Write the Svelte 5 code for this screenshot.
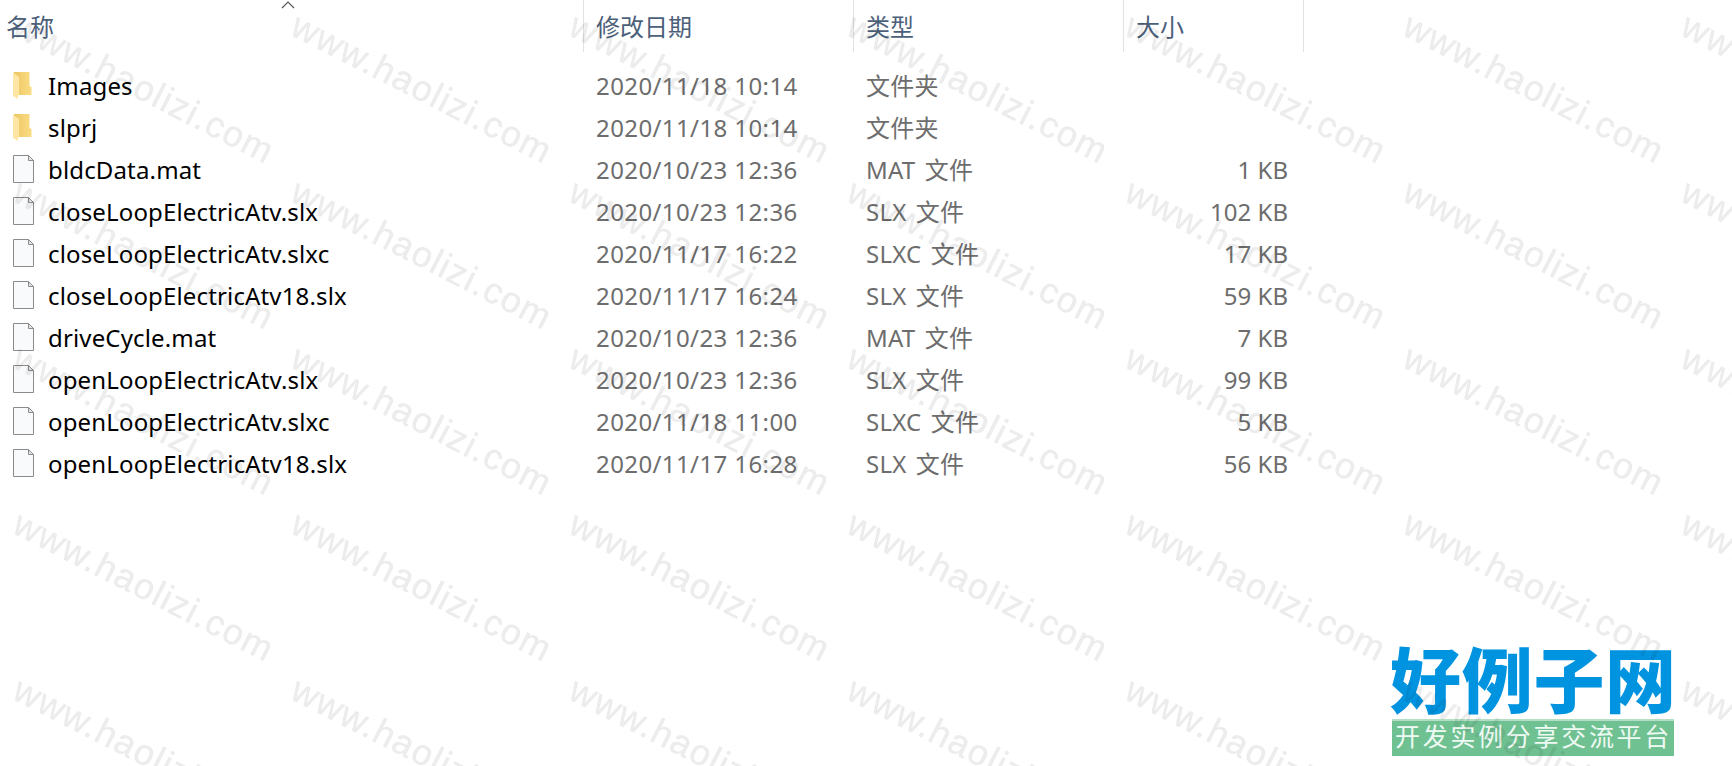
<script>
	let files = [
		{ name: 'Images', date: '2020/11/18 10:14', type: '文件夹', folder: true },
		{ name: 'slprj', date: '2020/11/18 10:14', type: '文件夹', folder: true },
		{ name: 'bldcData.mat', date: '2020/10/23 12:36', type: 'MAT 文件', size: '1 KB' },
		{ name: 'closeLoopElectricAtv.slx', date: '2020/10/23 12:36', type: 'SLX 文件', size: '102 KB' },
		{ name: 'closeLoopElectricAtv.slxc', date: '2020/11/17 16:22', type: 'SLXC 文件', size: '17 KB' },
		{ name: 'closeLoopElectricAtv18.slx', date: '2020/11/17 16:24', type: 'SLX 文件', size: '59 KB' },
		{ name: 'driveCycle.mat', date: '2020/10/23 12:36', type: 'MAT 文件', size: '7 KB' },
		{ name: 'openLoopElectricAtv.slx', date: '2020/10/23 12:36', type: 'SLX 文件', size: '99 KB' },
		{ name: 'openLoopElectricAtv.slxc', date: '2020/11/18 11:00', type: 'SLXC 文件', size: '5 KB' },
		{ name: 'openLoopElectricAtv18.slx', date: '2020/11/17 16:28', type: 'SLX 文件', size: '56 KB' }
	];
</script>

<main class="explorer">
	<div class="header">
		<div class="col">
			名称
			<svg class="sort" width="14" height="8" viewBox="0 0 14 8"><path d="M1 7 7 1l6 6" fill="none" stroke="#555" stroke-width="1.1" /></svg>
		</div>
		<div class="col">修改日期</div>
		<div class="col">类型</div>
		<div class="col">大小</div>
	</div>

	<div class="list">
		{#each files as file}
			<div class="row">
				<div class="icon">
					{#if file.folder}
						<svg width="22" height="28" viewBox="0 0 22 28">
							<defs>
								<linearGradient id="back"><stop stop-color="#edc765" /><stop offset="1" stop-color="#fbdc83" /></linearGradient>
							</defs>
							<path d="M1 1H16.5V15L18.5 16V24H1Z" fill="url(#back)" />
							<path d="M0 1.5 6 6V24.5H5V28L0 25Z" fill="#ffe6a4" />
						</svg>
					{:else}
						<svg width="22" height="28" viewBox="0 0 22 28">
							<path d="M.5.5H15.5L20.5 5.5V27.5H.5Z" fill="#f8fafb" stroke="#8b8b8b" />
							<path d="M15.5.5V5.5H20.5Z" fill="#e4e5e6" stroke="#8b8b8b" />
						</svg>
					{/if}
				</div>
				<span class="name">{file.name}</span>
				<span class="date">{file.date}</span>
				<span class="type">{file.type}</span>
				<span class="size">{file.size ?? ''}</span>
			</div>
		{/each}
	</div>

	<div class="logo">
		<div class="title">好例子网</div>
		<div class="slogan">开发实例分享交流平台</div>
	</div>

	<svg class="watermark" width="1732" height="766">
		<defs>
			<pattern id="mark" width="278" height="166" patternUnits="userSpaceOnUse">
				<text transform="translate(10.5 34) rotate(27)" textLength="286">www.haolizi.com</text>
			</pattern>
		</defs>
		<rect width="1732" height="766" fill="url(#mark)" />
	</svg>
</main>

<style>
	:global(body) {
		margin: 0;
		background: #fff;
	}

	.explorer {
		position: relative;
		width: 1732px;
		height: 766px;
		overflow: hidden;
		font-family: "Noto Sans", "Noto Sans CJK SC", sans-serif;
		font-size: 24px;
		color: #6d6d6d;
	}

	.header {
		display: grid;
		grid-template-columns: 584px 270px 270px 180px;
		height: 52px;
		padding-bottom: 12px;
		color: #4c607a;
		font-family: "Noto Sans CJK SC", sans-serif;
	}

	.col {
		position: relative;
		box-sizing: border-box;
		height: 52px;
		padding-left: 12px;
		line-height: 52px;
		border-right: 1px solid #e2e2e2;
	}

	.col:first-child {
		padding-left: 6px;
	}

	.sort {
		position: absolute;
		top: 1px;
		left: 281px;
	}

	.row {
		display: grid;
		grid-template-columns: 48px 548px 270px 270px 152px;
		align-items: center;
		height: 42px;
		line-height: 42px;
		white-space: pre;
	}

	.icon {
		display: flex;
		padding-left: 13px;
	}

	.name,
	.date,
	.type,
	.size {
		padding-top: 1px;
		line-height: 41px;
	}

	.name {
		color: #000;
		letter-spacing: 0.15px;
	}

	.date {
		letter-spacing: 0.4px;
	}

	.type {
		letter-spacing: 0.2px;
		word-spacing: 3px;
	}

	.size {
		text-align: right;
	}

	.logo {
		position: absolute;
		left: 1390px;
		top: 640px;
		width: 284px;
		font-family: "Noto Sans CJK SC", sans-serif;
	}

	.title {
		height: 79px;
		line-height: 72px;
		font-size: 71px;
		font-weight: 900;
		letter-spacing: 0.7px;
		color: #0093e0;
		white-space: nowrap;
	}

	.slogan {
		box-sizing: border-box;
		height: 37px;
		margin-left: 2px;
		padding-left: 3px;
		border-top: 2px solid #b4dfc6;
		background: #70c192;
		color: #eefaf3;
		font-size: 25px;
		letter-spacing: 2.7px;
		line-height: 29px;
		white-space: nowrap;
	}

	.watermark {
		position: absolute;
		top: 0;
		left: 0;
		pointer-events: none;
	}

	.watermark text {
		font-family: "Liberation Sans", Arial, sans-serif;
		font-size: 36px;
		fill: rgba(0, 0, 0, 0.07);
		stroke: rgba(0, 0, 0, 0.03);
		stroke-width: 0.6px;
	}
</style>
